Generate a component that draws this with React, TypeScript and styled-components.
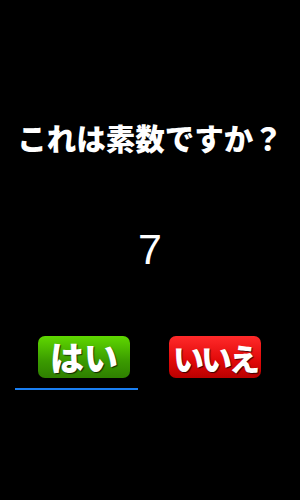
import React from "react";
import styled, { createGlobalStyle } from "styled-components";

const Global = createGlobalStyle`
  html, body { margin: 0; padding: 0; background: #000; }
  #root { width: 300px; height: 500px; }
`;

const Screen = styled.div`
  width: 300px;
  height: 500px;
  background: #000;
  display: flex;
  flex-direction: column;
  align-items: center;
  font-family: "Noto Sans CJK JP", "Noto Sans", sans-serif;
  color: #fff;
`;

const Title = styled.div`
  margin-top: 117px;
  font-size: 29.5px;
  font-weight: 900;
  line-height: 40px;
  white-space: nowrap;
`;

const Number = styled.div`
  margin-top: 67px;
  font-family: "Liberation Sans", Arial, sans-serif;
  font-size: 43px;
  line-height: 50px;
`;

const ButtonRow = styled.div`
  margin-top: 62px;
  width: 100%;
  display: flex;
  justify-content: space-between;
  padding: 0 39px 0 15px;
  box-sizing: border-box;
`;

const Slot = styled.div<{ $underline?: boolean }>`
  width: 125px;
  display: flex;
  flex-direction: column;
  align-items: ${(p) => (p.$underline ? "flex-start" : "flex-end")};
  padding-left: ${(p) => (p.$underline ? "23px" : "0")};
  box-sizing: border-box;
  height: 54px;
  border-bottom: 2px solid ${(p) => (p.$underline ? "#1a7ff2" : "transparent")};
`;

const Btn = styled.div<{ $color: "green" | "red" }>`
  width: 92px;
  height: 42px;
  border-radius: 7px;
  background: ${(p) =>
    p.$color === "green"
      ? "linear-gradient(#5fd800, #3a9a00 60%, #2e7f00)"
      : "linear-gradient(#ff2a2a, #e00808 60%, #b80000)"};
  display: flex;
  align-items: center;
  justify-content: center;
  font-size: ${(p) => (p.$color === "green" ? "34px" : "31px")};
  font-weight: 900;
  line-height: 1;
  color: #fff;
  text-shadow: 1px 1px 1px rgba(0, 0, 0, 0.7);
  white-space: nowrap;
  letter-spacing: ${(p) => (p.$color === "green" ? "0px" : "-3px")};
`;

export default function App() {
  return (
    <>
      <Global />
      <Screen>
        <Title>これは素数ですか？</Title>
        <Number>7</Number>
        <ButtonRow>
          <Slot $underline>
            <Btn $color="green">はい</Btn>
          </Slot>
          <Slot>
            <Btn $color="red">いいえ</Btn>
          </Slot>
        </ButtonRow>
      </Screen>
    </>
  );
}
